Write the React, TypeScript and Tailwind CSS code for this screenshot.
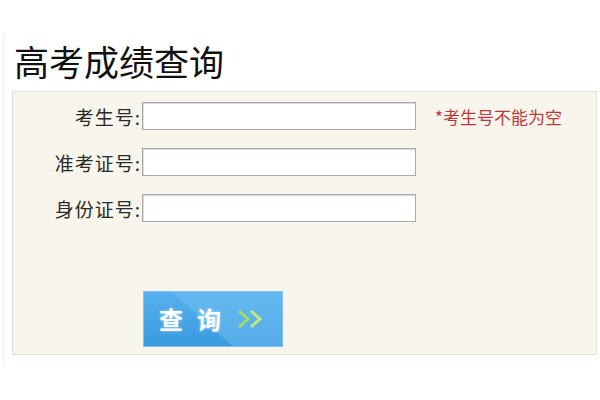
export default function App() {
  const rows = [
    { label: "考生号:", error: "*考生号不能为空" },
    { label: "准考证号:", error: "" },
    { label: "身份证号:", error: "" },
  ]

  return (
    <div
      className="w-[600px] h-[400px] bg-white overflow-hidden"
      style={{ fontFamily: '"Noto Sans CJK SC", "Noto Sans", sans-serif' }}
    >
      <div className="ml-[3px] mt-[33px] h-[332px] border-l border-[#eeeeea]">
        <div className="h-[54px] pl-[10px] flex items-center text-[35px] leading-none text-[#111]">
          高考成绩查询
        </div>
        <div className="ml-[8px] mt-[4px] w-[585px] h-[264px] bg-[#f8f6ec] border border-[#e2e1d8] flex flex-col pt-[10px]">
          <div className="flex flex-col gap-[18px]">
            {rows.map((r) => (
              <div key={r.label} className="flex items-center h-[28px]">
                <div className="w-[129px] text-right text-[19px] tracking-[1px] text-[#2a2a2a] leading-none pr-[1px]">
                  {r.label}
                </div>
                <div className="w-[274px] h-[28px] bg-white border border-[#a9a9a9] shadow-[inset_1px_1px_0_#dcdcdc]" />
                {r.error && (
                  <div className="ml-[19px] text-[17px] leading-none text-[#b8383c]">{r.error}</div>
                )}
              </div>
            ))}
          </div>
          <div className="ml-[130px] mt-[69px] w-[140px] h-[56px] relative overflow-hidden bg-gradient-to-b from-[#55b0ee] to-[#3a9be0] border border-[#7fc2ef] flex items-center pl-[15px]">
            <div className="absolute right-0 top-0 h-full w-[110px] bg-[#7cc6f5] opacity-40 [clip-path:polygon(0_0,100%_0,100%_100%,55%_100%)]" />
            <span className="relative text-white text-[24px] leading-none font-semibold tracking-[14px] [text-shadow:0_0_3px_rgba(255,255,255,0.5)]">
              查询
            </span>
            <svg className="relative ml-[2px]" width="28" height="22" viewBox="0 0 28 22">
              <polyline points="2,3 11,11 2,19" fill="none" stroke="#a6db5e" strokeWidth="3" />
              <polyline points="14,3 23,11 14,19" fill="none" stroke="#c3e97e" strokeWidth="3" />
            </svg>
          </div>
        </div>
      </div>
    </div>
  )
}
